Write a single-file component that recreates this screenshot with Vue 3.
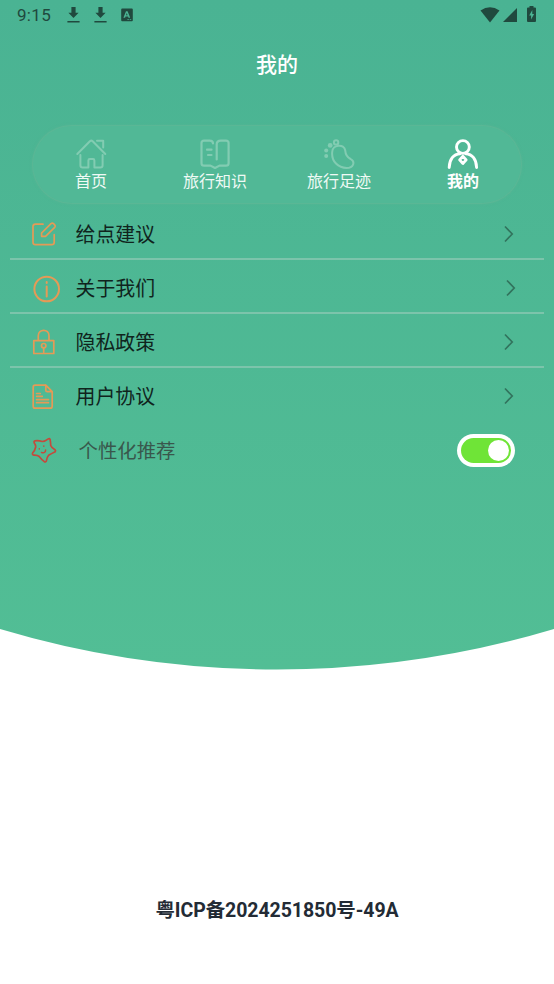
<script setup>
import { ref } from 'vue'

const tabs = [
  { id: 'home', label: '首页' },
  { id: 'guide', label: '旅行知识' },
  { id: 'track', label: '旅行足迹' },
  { id: 'me', label: '我的' },
]
const active = ref('me')
const rows = [
  { id: 'edit', label: '给点建议' },
  { id: 'info', label: '关于我们' },
  { id: 'lock', label: '隐私政策' },
  { id: 'doc', label: '用户协议' },
]
const personalized = ref(true)
</script>

<template>
  <div class="screen">
    <svg class="backdrop" viewBox="0 0 554 670" aria-hidden="true">
      <defs>
        <linearGradient id="green" x1="0" y1="0" x2="0" y2="1">
          <stop offset="0" stop-color="#4ab393" />
          <stop offset="1" stop-color="#52be95" />
        </linearGradient>
      </defs>
      <path d="M0 0H554V629A967 967 0 0 1 0 629Z" fill="url(#green)" />
    </svg>

    <header class="status">
      <span class="time">9:15</span>
      <svg v-for="n in 2" :key="n" class="download" viewBox="0 0 13 18">
        <path d="M4.4 1h4.2v5.7h3L6.5 12 1.4 6.7h3zM.4 14.9h12.2v1.6H.4z" />
      </svg>
      <svg class="badge" viewBox="0 0 12 14">
        <path fill-rule="evenodd" d="M1.2.5h9.6q1 0 1 1v10.8q0 1-1 1H1.2q-1 0-1-1V1.500q0-1 1-1zM5 3.200 2.400 9.800h1.700l.4-1.200h2.600l.4 1.200h1.700L6.600 3.200zM5 7.300 5.800 4.900 6.600 7.300zM6.400 11h1.500v.8H6.400zm2.300 0h1.500v.8H8.700z" />
      </svg>
      <span class="spacer"></span>
      <svg class="wifi" viewBox="0 0 20 16"><path d="M.5 3.600Q10-3.200 19.500 3.600L10 15.500z" /></svg>
      <svg class="signal" viewBox="0 0 14 14"><path d="M14 0v14H0z" /></svg>
      <svg class="battery" viewBox="0 0 9 16">
        <path fill-rule="evenodd" d="M2.500 0h4v1.500H8q1 0 1 1V15q0 1-1 1H1q-1 0-1-1V2.500q0-1 1-1h1.500zM5.300 4 2.200 9.400h1.900v4.200l3-5.600H5.300z" />
      </svg>
    </header>

    <h1 class="title">我的</h1>

    <nav class="tabs">
      <button
        v-for="t in tabs"
        :key="t.id"
        class="tab"
        :class="{ active: active === t.id }"
        @click="active = t.id"
      >
        <svg class="tab-icon" viewBox="0 0 32 32">
          <g v-if="t.id === 'home'">
            <path d="M2.300 16 14.900 3.200Q16.300 2 17.700 3.200L30.300 16M22 2.800H28.200V9.500M5.400 17V27.300Q5.400 29.500 7.600 29.500H13.400V22.400Q13.400 21 14.800 21H18Q19.400 21 19.400 22.400V29.500H25.400Q27.600 29.500 27.600 27.300V17" />
          </g>
          <g v-else-if="t.id === 'guide'">
            <path d="M14 5.500Q14 2.600 10.600 2.600H5Q2.500 2.600 2.500 5V25.200Q2.500 27.600 5 27.600H11.500L16 30 20.500 27.600H27Q29.600 27.600 29.600 25.200V5Q29.600 2.600 27 2.600H21.800Q17.700 2.600 17.700 6.500V21.500M8 11.700H12.500M9 17H12.500" stroke-width="2.200" />
          </g>
          <g v-else-if="t.id === 'track'">
            <path d="M9.200 14C9.200 6.500 21.500 5.300 22.200 12.400C22.500 16.500 23.500 19 27.600 21C32.600 23.800 30.500 30 23.600 30C15.500 30 8.200 23.500 9.200 14Z" />
            <circle cx="13.100" cy="4.400" r="2.200" />
            <g class="toes">
              <circle cx="7.200" cy="7.400" r="2.400" />
              <circle cx="3.200" cy="12.500" r="2" />
              <circle cx="3.200" cy="18" r="2" />
            </g>
          </g>
          <g v-else stroke-width="2.900">
            <circle cx="15.900" cy="9" r="6.400" />
            <path d="M2.200 29.500C2.400 21.500 6.500 16 13 15.700M18.800 15.700C25.300 16 29.400 21.500 29.600 29.500" />
            <path d="M15.900 18.300 19.200 21.900 15.900 25.500 12.600 21.900Z" stroke-width="2.800" />
          </g>
        </svg>
        <span>{{ t.label }}</span>
      </button>
    </nav>

    <main class="list">
      <div v-for="r in rows" :key="r.id" class="row">
        <svg class="row-icon" viewBox="0 0 32 32">
          <path v-if="r.id === 'edit'" d="M13 6.200H5.400Q3 6.200 3 8.600V24.200Q3 26.600 5.400 26.600H21.800Q24.200 26.600 24.200 24.200V16.700M11.600 18.300V15L21 5.700Q22.300 4.500 23.500 5.700L24.700 6.900Q25.900 8.100 24.700 9.400L15.500 18.300Z" />
          <g v-else-if="r.id === 'info'" stroke-width="2">
            <circle cx="16.700" cy="17" r="12.300" />
            <path d="M16.700 14.500V24.500M16.700 10V11" />
          </g>
          <g v-else-if="r.id === 'lock'">
            <path d="M3.800 14.600H23.800V27.500H3.800ZM8.300 14.600V9.800C8.300 2.500 19 2.500 19 9.800V14.600M13.700 21.800V26" />
            <circle cx="13.700" cy="19.700" r="2.200" />
          </g>
          <path v-else d="M15.800 5.200H5.200Q3.200 5.200 3.200 7.200V26.200Q3.200 28.200 5.200 28.200H20.200Q22.200 28.200 22.200 26.200V11.700L15.800 5.200V10.200Q15.800 11.700 17.300 11.700H22.200M6.600 13.500H10.300M6.600 16.300H12.300M6.600 19.600H18.500M6.600 22.700H18.500" />
        </svg>
        <span class="row-label">{{ r.label }}</span>
        <svg class="chevron" :class="{ shifted: r.id === 'info' }" viewBox="0 0 10 18">
          <path d="M1 1.500 8.200 9 1 16.500" />
        </svg>
      </div>
      <div class="row preference">
        <svg class="row-icon star" viewBox="0 0 32 32">
          <path d="M18.300 4.900Q15 7.500 12.300 7.500Q8.500 6.300 5 6.800Q3.700 7.100 4.200 8.700Q6 11.200 5.700 13Q5 16.500 2.600 19Q2 20.600 3.800 21.200Q7.500 21 9.200 22.500Q11.500 25.500 14.300 27.700Q15.900 28.400 16.400 26.700Q17 23 18.600 21.200Q22 19.200 25.200 17.700Q26 16.500 25 15.700Q21.300 13.500 20.700 11.500Q20.700 8.500 20.100 5.500Q19.500 4 18.300 4.900Z" />
          <path d="M11.500 18.500Q15.700 19.500 15.600 16M9.300 14.800V15.100M13.800 12V12.300" stroke-width="1.500" />
        </svg>
        <span class="row-label">个性化推荐</span>
        <button class="switch" :class="{ on: personalized }" role="switch" :aria-checked="personalized" @click="personalized = !personalized">
          <span class="track"><span class="knob"></span></span>
        </button>
      </div>
    </main>

    <footer class="record">粤ICP备2024251850号-49A</footer>
  </div>
</template>

<style>
body {
  background: #fff;
}
</style>

<style scoped>
.screen {
  position: relative;
  z-index: 0;
  display: flex;
  flex-direction: column;
  height: 984px;
  overflow: hidden;
  font-family: Roboto, "Noto Sans CJK SC", sans-serif;
}
.backdrop {
  position: absolute;
  top: 0;
  left: 0;
  width: 554px;
  height: 670px;
  z-index: -1;
}
button {
  border: 0;
  padding: 0;
  background: none;
  font: inherit;
  color: inherit;
}
.status {
  display: flex;
  align-items: center;
  height: 30px;
  padding: 0 18px 0 17px;
  color: #20493e;
  fill: #20493e;
}
.time {
  width: 50px;
  font-size: 17px;
  line-height: 30px;
  letter-spacing: 0.3px;
}
.download {
  width: 13px;
  height: 18px;
  margin-right: 14px;
}
.badge {
  width: 12px;
  height: 14px;
}
.spacer {
  flex: 1;
}
.wifi {
  width: 20px;
  height: 16px;
  margin-right: 3px;
}
.signal {
  width: 14px;
  height: 14px;
  margin-right: 10px;
}
.battery {
  width: 9px;
  height: 16px;
  margin-bottom: 2px;
}
.title {
  margin: 19px 0 0;
  text-align: center;
  font-size: 21px;
  line-height: 33px;
  font-weight: 500;
  color: #fff;
}
.tabs {
  display: flex;
  justify-content: center;
  box-sizing: border-box;
  height: 79px;
  margin: 43px 32px 0;
  padding-top: 12px;
  border: 1px solid rgba(110, 180, 150, 0.35);
  border-radius: 40px;
  background: #51b896;
  box-shadow: 0 0 3px rgba(100, 180, 150, 0.4);
}
.tab {
  display: flex;
  flex: 0 0 124px;
  flex-direction: column;
  align-items: center;
  color: #effaf5;
  font-size: 16px;
  line-height: 24px;
}
.tab-icon {
  width: 32px;
  height: 32px;
  fill: none;
  stroke: #82ccb2;
  stroke-width: 2;
  stroke-linecap: round;
  stroke-linejoin: round;
}
.toes {
  fill: #82ccb2;
  stroke: none;
}
.tab.active {
  color: #fff;
  font-weight: 700;
}
.active .tab-icon {
  stroke: #fff;
}
.list {
  display: flex;
  flex-direction: column;
  padding: 2px 10px 0;
}
.row {
  display: flex;
  align-items: center;
  box-sizing: border-box;
  height: 54px;
  padding: 4px 30px 0 20px;
  border-bottom: 2px solid #7cc4ab;
  color: #10241d;
}
.row:nth-child(n + 4) {
  border-bottom-color: transparent;
}
.row-icon {
  width: 32px;
  height: 32px;
  fill: none;
  stroke: #e59a56;
  stroke-width: 1.7;
  stroke-linecap: round;
  stroke-linejoin: round;
}
.row-label {
  flex: 1;
  margin-left: 13.500px;
  padding-top: 3px;
  font-size: 19.900px;
  line-height: 28px;
}
.chevron {
  width: 10px;
  height: 18px;
  fill: none;
  stroke: #32735d;
  stroke-width: 1.7;
}
.shifted {
  margin-right: -2px;
}
.preference {
  padding-right: 29px;
  color: #39574c;
}
.preference .row-label {
  margin-left: 16.500px;
  font-size: 19.400px;
}
.star {
  stroke: #c44a3c;
}
.switch {
  box-sizing: border-box;
  width: 58px;
  height: 33px;
  padding: 4px;
  border-radius: 17px;
  background: #fff;
}
.track {
  display: flex;
  align-items: center;
  box-sizing: border-box;
  height: 25px;
  padding: 0 2px;
  border-radius: 13px;
  background: #c9d3cf;
}
.on .track {
  justify-content: flex-end;
  background: #6fe437;
}
.knob {
  width: 21px;
  height: 21px;
  border-radius: 50%;
  background: #fff;
}
.record {
  margin-top: 419px;
  text-align: center;
  font-size: 19.500px;
  letter-spacing: -0.070px;
  line-height: 32px;
  font-weight: 700;
  color: #232b35;
}
</style>
